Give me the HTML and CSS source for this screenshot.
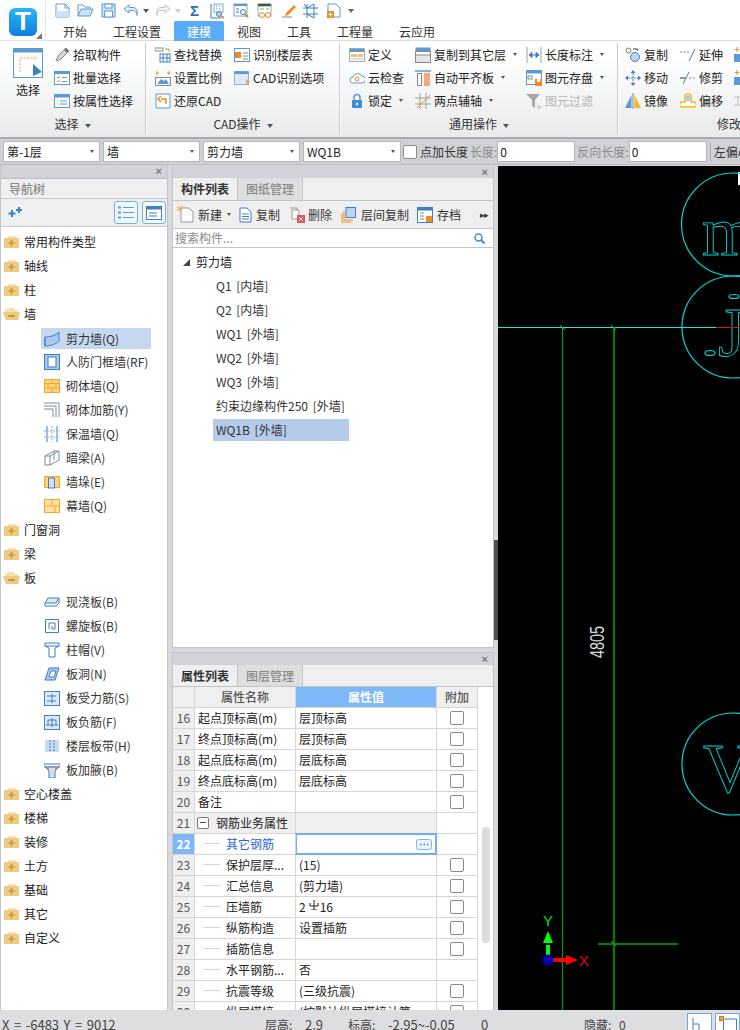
FILE: index.html
```html
<!DOCTYPE html>
<html lang="zh">
<head>
<meta charset="utf-8">
<title>建模</title>
<link rel="stylesheet" href="styles.css">
</head>
<body>
<svg class="sprite" aria-hidden="true">
  <symbol id="fplus" viewBox="0 0 15 14"><path d="M4 1h7l1 2H4z" fill="#f5dfae"/><rect x="0" y="3" width="15" height="10" fill="#efcb82"/><path d="M7.5 5v6M4.500 8h6" stroke="#c9963c" stroke-width="1.600"/></symbol>
  <symbol id="fminus" viewBox="0 0 17 14"><path d="M2 3l4-2h5l1 2h3v2H2z" fill="#f5dfae"/><path d="M0 5h17l-2 8H3z" fill="#efcb82"/><path d="M5 9h7" stroke="#b88a38" stroke-width="1.600"/></symbol>
</svg>
<div class="app">
  <header class="head">
    <div class="logo-col">
      <div class="logo">T</div>
      <span class="logo-corner"></span>
    </div>
    <div class="head-right">
      <div class="quick">
        <svg class="q q-a" width="15" height="15" viewBox="0 0 15 15"><path d="M1 1h9l4 4v9H1z" fill="#fff" stroke="#5b9bd5"/><path d="M1 8h13v6H1z" fill="#cfe2f5"/><path d="M10 1v4h4" fill="none" stroke="#5b9bd5"/></svg>
        <svg class="q q-b" width="17" height="15" viewBox="0 0 17 15"><path d="M1 13V2h5l2 2h5v2" fill="none" stroke="#5b9bd5"/><path d="M1 13l3-7h12l-3 7z" fill="#cfe2f5" stroke="#5b9bd5"/></svg>
        <svg class="q q-c" width="15" height="15" viewBox="0 0 15 15"><path d="M1 1h13v13H1z" fill="#cfe2f5" stroke="#5b9bd5"/><path d="M4 1h7v4H4zM3.500 8h8v6h-8z" fill="#fff" stroke="#5b9bd5"/></svg>
        <svg class="q q-d" width="16" height="13" viewBox="0 0 16 13"><path d="M6 1L1 5l5 4V6.500h4c2 0 4 1 4 5 1-5-1-8-4-8H6z" fill="#e4effa" stroke="#5b9bd5"/></svg>
        <span class="qc qc-a"></span>
        <svg class="q q-e" width="16" height="13" viewBox="0 0 16 13"><path d="M10 1l5 4-5 4V6.500H6c-2 0-4 1-4 5-1-5 1-8 4-8h4z" fill="#f4f4f4" stroke="#c4c4c4"/></svg>
        <span class="qc qc-b"></span>
        <span class="sigma">Σ</span>
        <svg class="q q-f" width="16" height="16" viewBox="0 0 16 16"><path d="M1 1v14h10" fill="none" stroke="#3f7fc4"/><rect x="4" y="1" width="9" height="8" fill="#fff" stroke="#7aa7d8"/><path d="M6 3h1M9 3h1M6 6h1M9 6h1" stroke="#3f7fc4"/><circle cx="9" cy="11" r="2.500" fill="#bcd6f0" stroke="#3f7fc4"/><path d="M11 13l3 2" stroke="#e8862a" stroke-width="2"/></svg>
        <svg class="q q-g" width="16" height="16" viewBox="0 0 16 16"><rect x="1" y="1" width="13" height="12" fill="#fff" stroke="#7aa7d8"/><path d="M1 1h13v2H1z" fill="#5b9bd5"/><path d="M3 6h3M3 9h3" stroke="#6a6a6a"/><circle cx="10" cy="9" r="2.500" fill="#fff" stroke="#3f7fc4"/><path d="M12 11l3 3" stroke="#e8862a" stroke-width="2"/></svg>
        <svg class="q q-h" width="16" height="16" viewBox="0 0 16 16"><rect x="1" y="1" width="13" height="12" fill="#fff" stroke="#9ab"/><path d="M1 1h13v2H1zM3 6h4M9 6h3" stroke="#7ab27a"/><circle cx="5" cy="12" r="2.500" fill="#fff" stroke="#e8862a"/><circle cx="11" cy="12" r="2.500" fill="#fff" stroke="#e8862a"/></svg>
        <svg class="q q-i" width="16" height="16" viewBox="0 0 16 16"><path d="M1 14h10" stroke="#888"/><path d="M5 10l8-8 2 2-8 8-3 1z" fill="#f08a24"/></svg>
        <svg class="q q-j" width="17" height="16" viewBox="0 0 17 16"><path d="M1 5h15M1 11h15M5 1v14M12 1v14M2 1l3 4 7-4M5 11l7 4" fill="none" stroke="#3f7fc4"/></svg>
        <svg class="q q-k" width="14" height="16" viewBox="0 0 14 16"><path d="M1 1h8l4 4v9H1z" fill="#fff" stroke="#5b9bd5"/><rect x="0" y="8" width="7" height="7" fill="#ee8b22"/><path d="M3.500 9.500v4M1.500 11.500h4" stroke="#fff"/></svg>
        <span class="qc qc-c"></span>
      </div>
      <nav class="tabs">
        <span class="tab">开始</span><span class="tab">工程设置</span><span class="tab tab-on">建模</span><span class="tab">视图</span><span class="tab">工具</span><span class="tab">工程量</span><span class="tab">云应用</span>
      </nav>
    </div>
  </header>

  <section class="ribbon">
    <div class="rg rg1">
      <div class="rg-body">
        <div class="big">
          <svg width="30" height="30" viewBox="0 0 30 30"><rect x="0.500" y="0.500" width="29" height="29" fill="#fff" stroke="#5b9bd5"/><rect x="0.500" y="0.500" width="29" height="4" fill="#5b9bd5"/><path d="M7 24V10h18" fill="none" stroke="#f5a623" stroke-dasharray="2 1.500"/><path d="M20 16l9 8-9 4z" fill="#3f7fc4"/></svg>
          <span>选择</span>
        </div>
        <div class="col">
          <div class="it"><svg width="16" height="16" viewBox="0 0 16 16"><path d="M2 14l2-5 6-6 3 3-6 6z" fill="#d8d8d8" stroke="#8a8a8a"/><path d="M10 2l2-1 3 3-1 2z" fill="#555"/></svg>拾取构件</div>
          <div class="it"><svg width="16" height="16" viewBox="0 0 16 16"><rect x="0.500" y="1.500" width="15" height="13" fill="#fff" stroke="#5b9bd5"/><rect x="0.500" y="1.500" width="15" height="2.500" fill="#5b9bd5"/><path d="M3 7l1 1 2-2M3 11l1 1 2-2" fill="none" stroke="#f08a24"/><path d="M8 7.500h5M8 11.500h5" stroke="#5b9bd5"/></svg>批量选择</div>
          <div class="it"><svg width="16" height="16" viewBox="0 0 16 16"><rect x="0.500" y="1.500" width="15" height="13" fill="#fff" stroke="#5b9bd5"/><rect x="0.500" y="1.500" width="15" height="3" fill="#5b9bd5"/><path d="M3 8h1M6 8h7M3 11h1M6 11h7" stroke="#5b9bd5"/></svg>按属性选择</div>
        </div>
      </div>
      <div class="rg-title">选择<i class="car"></i></div>
    </div>
    <div class="rg rg2">
      <div class="rg-body">
        <div class="col col-a">
          <div class="it"><svg width="16" height="16" viewBox="0 0 16 16"><rect x="0" y="1" width="8" height="3" fill="#fff" stroke="#888"/><path d="M10 2h4v3" fill="none" stroke="#f08a24"/><rect x="5" y="7" width="10" height="8" fill="#fff" stroke="#3f7fc4"/><path d="M8 7v8M12 7v8M5 11h10" stroke="#3f7fc4"/></svg>查找替换</div>
          <div class="it"><svg width="16" height="16" viewBox="0 0 16 16"><path d="M1 3h3M12 3h3" stroke="#f08a24"/><path d="M2 1v4M14 1v4" stroke="#f08a24"/><rect x="0.500" y="7.500" width="15" height="8" fill="#fff" stroke="#888"/><path d="M2 14l4-5 3 2 2-2 3 5z" fill="#5b9bd5"/></svg>设置比例</div>
          <div class="it"><svg width="16" height="16" viewBox="0 0 16 16"><path d="M1 1h14v14H1z" fill="#fff" stroke="#5b9bd5"/><path d="M11 11V6H6M6 3L3 6l3 3" fill="none" stroke="#f08a24" stroke-width="1.500"/></svg>还原CAD</div>
        </div>
        <div class="col col-b">
          <div class="it"><svg width="16" height="16" viewBox="0 0 16 16"><rect x="0.500" y="1.500" width="15" height="13" fill="#fff" stroke="#5b9bd5"/><rect x="1" y="5" width="6" height="6" fill="#ee8b22"/><path d="M9 6h5M9 9h5M9 12h5" stroke="#888"/></svg>识别楼层表</div>
          <div class="it"><svg width="16" height="16" viewBox="0 0 16 16"><rect x="0.500" y="1.500" width="14" height="13" fill="#dfeaf6" stroke="#8fb4da"/><rect x="0.500" y="1.500" width="14" height="2.500" fill="#5b9bd5"/><path d="M12 9l4 3-4 3z" fill="#f0a060"/></svg>CAD识别选项</div>
        </div>
      </div>
      <div class="rg-title">CAD操作<i class="car"></i></div>
    </div>
    <div class="rg rg3">
      <div class="rg-body">
        <div class="col col-c">
          <div class="it"><svg width="16" height="16" viewBox="0 0 16 16"><rect x="0.500" y="1.500" width="15" height="13" fill="#fff" stroke="#aaa"/><rect x="1" y="2" width="14" height="3" fill="#5b9bd5"/><rect x="2" y="7" width="6" height="3" fill="#f5c26b"/><rect x="9" y="7" width="5" height="3" fill="#f5c26b"/><path d="M2 12h12" stroke="#bbb"/></svg>定义</div>
          <div class="it"><svg width="16" height="16" viewBox="0 0 16 16"><path d="M4 13a3 3 0 010-6 5 5 0 019-1 3.500 3.500 0 010 7z" fill="#fff" stroke="#5b9bd5"/><circle cx="8" cy="9" r="2" fill="none" stroke="#f08a24"/></svg>云检查</div>
          <div class="it"><svg width="16" height="16" viewBox="0 0 16 16"><path d="M5 7V4.500a3 3 0 016 0V7" fill="none" stroke="#5b9bd5" stroke-width="1.500"/><rect x="3" y="7" width="10" height="8" rx="1" fill="#3f8ddc"/><circle cx="8" cy="11" r="1.200" fill="#fff"/></svg>锁定<i class="car-s"></i></div>
        </div>
        <div class="col col-d">
          <div class="it"><svg width="16" height="16" viewBox="0 0 16 16"><rect x="0.500" y="0.500" width="15" height="5" fill="#5b9bd5"/><rect x="0.500" y="4.500" width="15" height="11" fill="#fff" stroke="#888"/><rect x="0.500" y="8" width="15" height="7.500" fill="#e6e6e6" stroke="#888"/></svg>复制到其它层<i class="car-s"></i></div>
          <div class="it"><svg width="16" height="16" viewBox="0 0 16 16"><path d="M0 1h16" stroke="#5b9bd5" stroke-width="1.500"/><rect x="2.500" y="3.500" width="4" height="12" fill="#fff" stroke="#888"/><rect x="9" y="3" width="6" height="13" fill="#f8a878"/></svg>自动平齐板<i class="car-s"></i></div>
          <div class="it"><svg width="16" height="16" viewBox="0 0 16 16"><path d="M0 5h16M0 11h16M5 0v16M11 0v16" stroke="#a0a0a0"/><path d="M2 15L15 2" stroke="#f08a24"/></svg>两点辅轴<i class="car-s"></i></div>
        </div>
        <div class="col col-e">
          <div class="it"><svg width="16" height="16" viewBox="0 0 16 16"><path d="M1 0v16M15 0v16" stroke="#8aa"/><path d="M3 8h10M3 8l3-2.500v5zM13 8l-3-2.500v5z" fill="#3f7fc4" stroke="#3f7fc4"/></svg>长度标注<i class="car-s"></i></div>
          <div class="it"><svg width="16" height="16" viewBox="0 0 16 16"><rect x="0.500" y="0.500" width="15" height="14" fill="#fff" stroke="#5b9bd5"/><rect x="0.500" y="0.500" width="15" height="3" fill="#5b9bd5"/><rect x="2" y="6" width="4" height="3" fill="none" stroke="#888"/><rect x="9" y="9" width="7" height="7" fill="#f08a24"/><rect x="11" y="9" width="3" height="3" fill="#fff"/></svg>图元存盘<i class="car-s"></i></div>
          <div class="it it-off"><svg width="16" height="16" viewBox="0 0 16 16"><path d="M0 1h14L9 7v8l-3-2V7z" fill="#a8a8a8"/><path d="M11 13h4M11 15h4" stroke="#bbb"/></svg>图元过滤</div>
        </div>
      </div>
      <div class="rg-title">通用操作<i class="car"></i></div>
    </div>
    <div class="rg rg4">
      <div class="rg-body">
        <div class="col col-f">
          <div class="it"><svg width="16" height="16" viewBox="0 0 16 16"><circle cx="3.500" cy="3.500" r="2.500" fill="#fff" stroke="#777"/><circle cx="10" cy="10" r="4.500" fill="#bcd6f0" stroke="#3f7fc4"/><path d="M8 2h4l1 2" fill="none" stroke="#333"/></svg>复制</div>
          <div class="it"><svg width="16" height="16" viewBox="0 0 16 16"><path d="M8 0l2.500 3h-5zM8 16l2.500-3h-5zM0 8l3-2.500v5zM16 8l-3-2.500v5z" fill="#3f7fc4"/><path d="M3 8h10M8 3v10" stroke="#3f7fc4" stroke-dasharray="2 1"/></svg>移动</div>
          <div class="it"><svg width="16" height="16" viewBox="0 0 16 16"><path d="M6.500 2v13H0z" fill="#5b9bd5"/><path d="M8 0v16" stroke="#888"/><path d="M9.500 2v13H16z" fill="#f5b52a"/></svg>镜像</div>
        </div>
        <div class="col col-g">
          <div class="it"><svg width="16" height="16" viewBox="0 0 16 16"><path d="M0 5h9" stroke="#888" stroke-dasharray="2 1.500"/><path d="M9 14L15 2" stroke="#3f7fc4"/></svg>延伸</div>
          <div class="it"><svg width="16" height="16" viewBox="0 0 16 16"><path d="M0 8h6" stroke="#333"/><path d="M9 8h7" stroke="#888" stroke-dasharray="2 1.500"/><path d="M3 14L9 2" stroke="#3f7fc4"/></svg>修剪</div>
          <div class="it"><svg width="16" height="16" viewBox="0 0 16 16"><path d="M5 9V4a3 3 0 016 0v5h3a2 2 0 010 5H2a2 2 0 010-5z" fill="#fff" stroke="#f5b52a" stroke-width="1.500"/><path d="M7 8V4a1 1 0 012 0v4" fill="none" stroke="#5b9bd5"/></svg>偏移</div>
        </div>
        <div class="col col-h">
          <div class="it"><svg width="16" height="16" viewBox="0 0 16 16"><path d="M3 0v5M1 2.500h4" stroke="#f08a24"/><rect x="0" y="7" width="9" height="8" fill="#5b9bd5"/></svg></div>
          <div class="it"><svg width="16" height="16" viewBox="0 0 16 16"><path d="M3 0v5M1 2.500h4" stroke="#f08a24"/><rect x="0" y="7" width="9" height="8" fill="#5b9bd5"/></svg></div>
          <div class="it"><svg width="16" height="16" viewBox="0 0 16 16"><path d="M0 4h8M4 4v8M0 12h8" fill="none" stroke="#bbb"/></svg></div>
        </div>
      </div>
      <div class="rg-title rg-title-l">修改</div>
    </div>
  </section>

  <section class="bar">
    <div class="combo c1">第-1层<i class="car-s"></i></div>
    <div class="combo c2">墙<i class="car-s"></i></div>
    <div class="combo c3">剪力墙<i class="car-s"></i></div>
    <div class="combo c4">WQ1B<i class="car-s"></i></div>
    <span class="cb cb-bar"></span>
    <span class="bar-t">点加长度</span>
    <span class="bar-g">长度:</span>
    <div class="inp">0</div>
    <span class="bar-g">反向长度:</span>
    <div class="inp">0</div>
    <span class="bar-sep"></span>
    <span class="bar-t">左偏心</span>
  </section>

  <main class="main">
    <aside class="panel left">
      <div class="ptitle"><span class="x">×</span></div>
      <div class="nav-h">导航树</div>
      <div class="nav-tools">
        <svg class="star" width="14" height="12" viewBox="0 0 14 12"><path d="M4 3v7M0.500 6.500h7M11 0v6M8 3h6" stroke="#3f7fc4" stroke-width="2"/></svg>
        <span class="nbtn"><svg width="16" height="14" viewBox="0 0 16 14"><path d="M0 1.500h3M0 6.500h3M0 11.500h3" stroke="#5b9bd5" stroke-width="2" stroke-dasharray="1 0"/><path d="M5 1.500h11M5 6.500h11M5 11.500h11" stroke="#5b9bd5"/></svg></span>
        <span class="nbtn"><svg width="16" height="14" viewBox="0 0 16 14"><rect x="0.500" y="0.500" width="15" height="13" fill="#fff" stroke="#3f7fc4"/><rect x="0.500" y="0.500" width="15" height="3" fill="#3f7fc4"/><path d="M3 7h8M3 10h8" stroke="#3f7fc4"/></svg></span>
      </div>
      <div class="tree">
        <div class="tn"><svg width="15" height="14"><use href="#fplus"/></svg>常用构件类型</div>
        <div class="tn"><svg width="15" height="14"><use href="#fplus"/></svg>轴线</div>
        <div class="tn"><svg width="15" height="14"><use href="#fplus"/></svg>柱</div>
        <div class="tn tn-open"><svg width="17" height="14"><use href="#fminus"/></svg>墙</div>
        <div class="tc tc-sel"><svg width="16" height="16" viewBox="0 0 16 16"><path d="M1 6c4 0 10-1 14-5v9c-4 4-10 5-14 5z" fill="#a9c9ee" stroke="#3f7fc4"/><path d="M1 6v9" stroke="#3f7fc4"/></svg>剪力墙(Q)</div>
        <div class="tc"><svg width="16" height="16" viewBox="0 0 16 16"><rect x="0.500" y="0.500" width="15" height="15" fill="#a9c9ee" stroke="#3f7fc4"/><rect x="4" y="3" width="8" height="10" fill="#fff" stroke="#3f7fc4"/></svg>人防门框墙(RF)</div>
        <div class="tc"><svg width="16" height="14" viewBox="0 0 16 14"><rect x="0.500" y="0.500" width="15" height="13" fill="#fbd583" stroke="#f5a623"/><path d="M0 4.500h16M0 9h16M8 0v4.500M4 4.500V9M12 4.500V9M8 9v5" stroke="#f5a623"/></svg>砌体墙(Q)</div>
        <div class="tc"><svg width="16" height="16" viewBox="0 0 16 16"><path d="M0 1h15v14M0 4h12v11M0 7h9v8" fill="none" stroke="#7c8a96"/></svg>砌体加筋(Y)</div>
        <div class="tc"><svg width="16" height="16" viewBox="0 0 16 16"><path d="M3 0v16M13 0v16" stroke="#3f7fc4"/><path d="M8 0v16M0 5h16M0 11h16" stroke="#8fb4da" stroke-dasharray="2 1"/></svg>保温墙(Q)</div>
        <div class="tc"><svg width="16" height="16" viewBox="0 0 16 16"><path d="M1 6l9-5h5v9l-9 5H1z" fill="#fff" stroke="#7c8a96"/><path d="M1 6h5v9M6 6l9-5" fill="none" stroke="#7c8a96"/><path d="M10 1v9" stroke="#5b9bd5"/></svg>暗梁(A)</div>
        <div class="tc"><svg width="16" height="14" viewBox="0 0 16 14"><rect x="0.500" y="1.500" width="15" height="11" fill="#fbd583" stroke="#f5a623"/><rect x="4.500" y="3" width="6" height="10" fill="#cfe2f5" stroke="#3f7fc4"/></svg>墙垛(E)</div>
        <div class="tc"><svg width="16" height="14" viewBox="0 0 16 14"><rect x="0.500" y="0.500" width="15" height="13" fill="#fde2a8" stroke="#f5a623"/><path d="M8 0v7M0 7h16M11 7v7" stroke="#f5a623"/></svg>幕墙(Q)</div>
        <div class="tn"><svg width="15" height="14"><use href="#fplus"/></svg>门窗洞</div>
        <div class="tn"><svg width="15" height="14"><use href="#fplus"/></svg>梁</div>
        <div class="tn tn-open"><svg width="17" height="14"><use href="#fminus"/></svg>板</div>
        <div class="tc"><svg width="16" height="10" viewBox="0 0 16 10"><path d="M4 1h11l-3 5H1z" fill="#dce9f7" stroke="#3f7fc4"/><path d="M1 6v3h11l3-3V1" fill="none" stroke="#3f7fc4"/></svg>现浇板(B)</div>
        <div class="tc"><svg width="14" height="14" viewBox="0 0 14 14"><path d="M.500.500h13v13H.500zM4 10V4h6v6H7V7" fill="none" stroke="#3f7fc4"/></svg>螺旋板(B)</div>
        <div class="tc"><svg width="16" height="16" viewBox="0 0 16 16"><path d="M1 1h14v3l-4 2v9H5V6L1 4z" fill="#fff" stroke="#3f7fc4"/><path d="M1 4h14" stroke="#3f7fc4"/></svg>柱帽(V)</div>
        <div class="tc"><svg width="16" height="14" viewBox="0 0 16 14"><path d="M5 1h10l-4 12H1z" fill="#a9c9ee" stroke="#3f7fc4"/><path d="M7 4h5l-2 6H5z" fill="#fff" stroke="#3f7fc4"/></svg>板洞(N)</div>
        <div class="tc"><svg width="16" height="15" viewBox="0 0 16 15"><rect x="0.500" y="0.500" width="15" height="14" fill="#dce9f7" stroke="#3f7fc4"/><path d="M3 5h9M3 10h9M8 3v9" stroke="#3f7fc4"/></svg>板受力筋(S)</div>
        <div class="tc"><svg width="16" height="15" viewBox="0 0 16 15"><rect x="0.500" y="0.500" width="15" height="14" fill="#dce9f7" stroke="#3f7fc4"/><path d="M4 10V5h8v5M8 3v9M2 10h12" fill="none" stroke="#3f7fc4"/></svg>板负筋(F)</div>
        <div class="tc"><svg width="14" height="12" viewBox="0 0 14 12"><rect width="14" height="12" fill="#c7dcf2"/><path d="M5 0v12M9 0v12" stroke="#3f7fc4" stroke-dasharray="2 1"/></svg>楼层板带(H)</div>
        <div class="tc"><svg width="16" height="15" viewBox="0 0 16 15"><path d="M0 1h16v3H0z" fill="#fff" stroke="#3f7fc4"/><path d="M1 4h14l-4 4V15H5V8z" fill="#cfe2f5" stroke="#3f7fc4"/><path d="M1 4h4v4zM15 4h-4v4z" fill="#f08a24"/></svg>板加腋(B)</div>
        <div class="tn"><svg width="15" height="14"><use href="#fplus"/></svg>空心楼盖</div>
        <div class="tn"><svg width="15" height="14"><use href="#fplus"/></svg>楼梯</div>
        <div class="tn"><svg width="15" height="14"><use href="#fplus"/></svg>装修</div>
        <div class="tn"><svg width="15" height="14"><use href="#fplus"/></svg>土方</div>
        <div class="tn"><svg width="15" height="14"><use href="#fplus"/></svg>基础</div>
        <div class="tn"><svg width="15" height="14"><use href="#fplus"/></svg>其它</div>
        <div class="tn"><svg width="15" height="14"><use href="#fplus"/></svg>自定义</div>
      </div>
    </aside>

    <div class="mid">
      <section class="panel comp">
        <div class="ptitle"><span class="x">×</span></div>
        <div class="ptabs"><span class="ptab ptab-on">构件列表</span><span class="ptab">图纸管理</span></div>
        <div class="ctools">
          <svg class="ct1" width="17" height="17" viewBox="0 0 17 17"><path d="M4 2h8l4 4v10H4z" fill="#fff" stroke="#999"/><path d="M0 1l3 2M3 0v4M6 0L3 3M0 4h5" stroke="#f5a623"/></svg>
          <span class="ct-t ct-new">新建</span><i class="car-s car-new"></i>
          <svg class="ct2" width="13" height="16" viewBox="0 0 13 16"><path d="M1 1h7l4 4v10H1z" fill="#fff" stroke="#3f7fc4"/><path d="M3 7h7M3 9.500h7M3 12h7" stroke="#3f7fc4"/></svg>
          <span class="ct-t ct-copy">复制</span>
          <svg class="ct3" width="16" height="16" viewBox="0 0 16 16"><path d="M3 3h7v9H3z" fill="#fff" stroke="#999"/><path d="M1 1h7v2" fill="none" stroke="#999"/><rect x="8" y="8" width="8" height="8" fill="#e0555a"/><path d="M10 10l4 4M14 10l-4 4" stroke="#fff"/></svg>
          <span class="ct-t ct-del">删除</span>
          <svg class="ct4" width="15" height="16" viewBox="0 0 15 16"><path d="M1 15V6M1 15h9M3 13V4M3 13h9" fill="none" stroke="#f08a24"/><rect x="5" y="0.500" width="9.500" height="10" fill="#bcd6f0" stroke="#3f7fc4"/></svg>
          <span class="ct-t ct-lay">层间复制</span>
          <svg class="ct5" width="16" height="16" viewBox="0 0 16 16"><rect x="0.500" y="0.500" width="15" height="15" fill="#fff" stroke="#3f7fc4"/><rect x="0.500" y="0.500" width="15" height="3" fill="#3f7fc4"/><path d="M3 6h4M3 9h4M3 12h4" stroke="#888"/><rect x="9" y="9" width="6" height="6" fill="#f08a24"/></svg>
          <span class="ct-t ct-arc">存档</span>
          <span class="more">▸▸</span>
        </div>
        <div class="search"><span>搜索构件...</span><svg width="11" height="11" viewBox="0 0 11 11"><circle cx="4.500" cy="4.500" r="3.500" fill="none" stroke="#3f94c4" stroke-width="1.500"/><path d="M7 7l3.500 3.500" stroke="#3f94c4" stroke-width="2"/></svg></div>
        <div class="clist">
          <div class="cgroup"><i class="tri"></i>剪力墙</div>
          <div class="ci">Q1 [内墙]</div>
          <div class="ci">Q2 [内墙]</div>
          <div class="ci">WQ1 [外墙]</div>
          <div class="ci">WQ2 [外墙]</div>
          <div class="ci">WQ3 [外墙]</div>
          <div class="ci">约束边缘构件250 [外墙]</div>
          <div class="ci ci-sel">WQ1B [外墙]</div>
        </div>
      </section>
      <section class="panel prop">
        <div class="ptitle"><span class="x">×</span></div>
        <div class="ptabs"><span class="ptab ptab-on">属性列表</span><span class="ptab">图层管理</span></div>
        <div class="tbl">
          <div class="tbl-main">
            <div class="r r-head"><span class="n"></span><span class="h">属性名称</span><span class="h h-on">属性值</span><span class="h">附加</span></div>
            <div class="r"><span class="n">16</span><span class="k">起点顶标高(m)</span><span class="v">层顶标高</span><span class="a"><i class="cb"></i></span></div>
            <div class="r"><span class="n">17</span><span class="k">终点顶标高(m)</span><span class="v">层顶标高</span><span class="a"><i class="cb"></i></span></div>
            <div class="r"><span class="n">18</span><span class="k">起点底标高(m)</span><span class="v">层底标高</span><span class="a"><i class="cb"></i></span></div>
            <div class="r"><span class="n">19</span><span class="k">终点底标高(m)</span><span class="v">层底标高</span><span class="a"><i class="cb"></i></span></div>
            <div class="r"><span class="n">20</span><span class="k">备注</span><span class="v"></span><span class="a"><i class="cb"></i></span></div>
            <div class="r r-grp"><span class="n">21</span><span class="k k-grp"><i class="minus"></i>钢筋业务属性</span><span class="v"></span><span class="a"></span></div>
            <div class="r r-cur"><span class="n">22</span><span class="k kc">其它钢筋</span><span class="v v-cur"><svg class="dots" width="16" height="11" viewBox="0 0 16 11"><rect x="0.500" y="0.500" width="15" height="10" rx="2" fill="#eef5fd" stroke="#7db8f8"/><path d="M4 5.500h1.500M7.500 5.500H9M11 5.500h1.500" stroke="#3f7fc4" stroke-width="1.500"/></svg></span><span class="a"></span></div>
            <div class="r"><span class="n">23</span><span class="k kc">保护层厚...</span><span class="v">(15)</span><span class="a"><i class="cb"></i></span></div>
            <div class="r"><span class="n">24</span><span class="k kc">汇总信息</span><span class="v">(剪力墙)</span><span class="a"><i class="cb"></i></span></div>
            <div class="r"><span class="n">25</span><span class="k kc">压墙筋</span><span class="v">2<svg class="rebar" width="10" height="10" viewBox="0 0 10 10"><path d="M1 3v3h8V3M5 0v10M2 10h6" fill="none" stroke="#222"/></svg>16</span><span class="a"><i class="cb"></i></span></div>
            <div class="r"><span class="n">26</span><span class="k kc">纵筋构造</span><span class="v">设置插筋</span><span class="a"><i class="cb"></i></span></div>
            <div class="r"><span class="n">27</span><span class="k kc">插筋信息</span><span class="v"></span><span class="a"><i class="cb"></i></span></div>
            <div class="r"><span class="n">28</span><span class="k kc">水平钢筋...</span><span class="v">否</span><span class="a"></span></div>
            <div class="r"><span class="n">29</span><span class="k kc">抗震等级</span><span class="v">(三级抗震)</span><span class="a"><i class="cb"></i></span></div>
            <div class="r"><span class="n">30</span><span class="k kc">纵层搭接</span><span class="v">(按默认纵层搭接计算</span><span class="a"><i class="cb"></i></span></div>
          </div>
          <div class="sb"><span class="thumb"></span></div>
        </div>
      </section>
    </div>
    <div class="handle"><span></span></div>
    <div class="canvas">
      <svg class="cad" width="242" height="844" viewBox="498 166 242 844">
        <rect x="738" y="172" width="2" height="13" fill="#fff"/>
        <g fill="none" stroke="#00d8d8" stroke-width="1.200">
          <circle cx="733" cy="224.500" r="51.500"/>
          <circle cx="733" cy="327" r="51"/>
          <circle cx="733" cy="764" r="51"/>
          <ellipse cx="734" cy="296.500" rx="5" ry="2"/>
          <ellipse cx="710" cy="353" rx="5" ry="2.500"/>
        </g>
        <text class="ltr" x="702" y="255">m</text>
        <text class="ltr" x="718" y="356">J</text>
        <text class="ltr" x="703" y="792">V</text>
        <path d="M498 327.500H716" stroke="#19e6e6"/>
        <path d="M716 327.500H740" stroke="#d01818"/>
        <path d="M562.500 327V1010" stroke="#00a800"/>
        <path d="M614 327V1010" stroke="#008000" stroke-width="2"/>
        <path d="M598 944H678" stroke="#008000" stroke-width="2"/>
        <path d="M560 325l5 5M611 325l5 5M611 941l5 5" stroke="#00c000"/>
        <text class="dim" transform="translate(604 658) rotate(-90) scale(.72 1)">4805</text>
        <path d="M548 960V945" stroke="#00ff00" stroke-width="4"/>
        <path d="M548 931l5 12h-10z" fill="#00ff00"/>
        <text class="ax ax-y" x="543" y="926">Y</text>
        <path d="M552 960H570" stroke="#ff0000" stroke-width="4"/>
        <path d="M578 960l-12 5v-10z" fill="#ff0000"/>
        <text class="ax ax-x" x="579" y="966">X</text>
        <circle cx="548" cy="960" r="5.500" fill="#0000b0"/>
      </svg>
    </div>
  </main>

  <footer class="status">
    <span class="s s1">X = -6483 Y = 9012</span>
    <span class="s s2">层高:</span><span class="s s3">2.9</span>
    <span class="s s4">标高:</span><span class="s s5">-2.95~-0.05</span>
    <span class="s s6">0</span>
    <span class="s s7">隐藏:&nbsp;0</span>
    <span class="sbtn sbtn1"><svg width="8" height="12" viewBox="0 0 8 12"><path d="M1 0v12M1 6h6v6" fill="none" stroke="#3f7fc4"/></svg></span>
    <span class="sbtn sbtn2"><svg width="18" height="14" viewBox="0 0 18 14"><path d="M4.500 14V3h13v11" fill="none" stroke="#3f7fc4"/><rect x="0.500" y="0.500" width="4" height="4" fill="#f5a060" stroke="#d07a30"/></svg></span>
  </footer>
</div>
</body>
</html>
```
FILE: styles.css
```css
* { box-sizing: border-box; }
html, body { margin: 0; padding: 0; }
body {
  width: 740px; height: 1030px; overflow: hidden;
  font: 12px/18px "Noto Sans CJK SC", "Noto Sans", sans-serif;
  color: #222; background: #fff;
}
i { font-style: normal; display: inline-block; }
.sprite { width: 0; height: 0; position: absolute; }
.app { width: 740px; height: 1030px; display: flex; flex-direction: column; overflow: hidden; }

/* header */
.head { height: 41px; display: flex; background: #fff; flex: none; }
.logo-col { width: 46px; border-right: 1px solid #e6e6e6; position: relative; flex: none; padding: 8px 0 0 9px; border-bottom: 1px solid #e6e6e6; }
.logo {
  width: 28px; height: 28px; border-radius: 6px;
  background: linear-gradient(#27b6f5, #0f7fe0);
  color: #fff; font: 900 26px/27px "Liberation Sans", sans-serif; text-align: center;
}
.logo-corner { position: absolute; right: 3px; bottom: 1px; border: 3px solid transparent; border-right-color: #777; border-bottom-color: #777; }
.head-right { flex: 1; min-width: 0; }
.quick { height: 21px; display: flex; align-items: center; padding-left: 9px; }
.q { flex: none; }
.q-b { margin-left: 7px; } .q-c { margin-left: 7px; } .q-d { margin-left: 7px; }
.qc { width: 0; height: 0; border: 3px solid transparent; border-top: 4px solid #555; border-bottom: 0; margin-left: 4px; flex: none; }
.qc-b { border-top-color: #ccc; }
.q-e { margin-left: 6px; }
.sigma { color: #2f6fb5; font: bold 15px/16px "Liberation Sans", sans-serif; margin-left: 9px; width: 12px; flex: none; }
.q-f { margin-left: 8px; } .q-g { margin-left: 7px; } .q-h { margin-left: 8px; } .q-i { margin-left: 8px; }
.q-j { margin-left: 5px; } .q-k { margin-left: 8px; }
.qc-c { margin-left: 7px; border-top-color: #666; }
.tabs { height: 20px; display: flex; padding-left: 4px; border-bottom: 1px solid #dcdcdc; }
.tab { padding: 0 13px; height: 20px; line-height: 21px; color: #333; flex: none; }
.tab-on { background: #5aabf8; color: #fff; border-radius: 2px 2px 0 0; }

/* ribbon */
.ribbon { height: 98px; flex: none; display: flex; background: linear-gradient(#fff 15%, #e9ebeb); border-bottom: 2px solid #a9abae; }
.rg { flex: none; display: flex; flex-direction: column; border-right: 1px solid #c9cbcc; margin: 2px 0 3px; box-shadow: 1px 0 0 #fff; }
.rg1 { width: 146px; }
.rg2 { width: 193px; margin-left: 1px; }
.rg3 { width: 277px; margin-left: 1px; }
.rg4 { width: 122px; margin-left: 1px; border-right: 0; box-shadow: none; }
.rg-body { height: 70px; display: flex; }
.rg-title { height: 22px; text-align: center; line-height: 23px; color: #333; }
.rg-title-l { text-align: left; padding-left: 98px; }
.big { width: 54px; flex: none; padding: 5px 0 0 13px; }
.big svg { display: block; }
.big span { display: block; margin: 3px 0 0 3px; }
.col { display: flex; flex-direction: column; flex: none; }
.it { height: 23px; display: flex; align-items: center; gap: 3px; white-space: nowrap; }
.it svg { flex: none; }
.it-off { color: #b5b5b5; }
.col-a { margin-left: 8px; width: 79px; }
.col-c { margin-left: 8px; width: 66px; }
.col-d { width: 111px; }
.col-f { margin-left: 6px; width: 55px; }
.col-g { width: 54px; }
.car { width: 0; height: 0; border: 3.500px solid transparent; border-top: 4px solid #555; border-bottom: 0; margin-left: 6px; vertical-align: middle; }
.car-s { width: 0; height: 0; border: 2.500px solid transparent; border-top: 3px solid #555; border-bottom: 0; margin-left: 6px; }
.it .car-s { margin-left: 4px; }

/* property bar */
.bar { height: 26px; flex: none; display: flex; align-items: center; padding-left: 3px; background: #cfd1d4; border-bottom: 1px solid #b9bbbe; white-space: nowrap; }
.combo { width: 97px; height: 21px; background: #fff; border: 1px solid #b5b7ba; padding-left: 3px; margin-right: 3px; line-height: 19px; display: flex; align-items: center; justify-content: space-between; flex: none; padding-right: 5px; }
.c4 { width: 98px; margin-right: 2px; }
.cb { display: inline-block; width: 14px; height: 14px; background: #fff; border: 1px solid #8a8a8a; border-radius: 2px; flex: none; }
.cb-bar { margin-right: 3px; }
.bar-t { flex: none; color: #333; }
.bar-g { color: #8b8d90; flex: none; margin-left: 2px; }
.inp { width: 78px; height: 21px; background: #fff; border: 1px solid #b5b7ba; padding-left: 2px; line-height: 19px; flex: none; }
.bar-sep { width: 1px; height: 18px; background: #a9abae; margin: 0 3px; flex: none; }

/* main */
.main { flex: 1; min-height: 0; display: flex; background: #d8d9dc; }
.panel { display: flex; flex-direction: column; }
.ptitle { height: 12px; flex: none; background: #d2d3d8; text-align: right; padding-right: 5px; }
.left .ptitle { height: 13px; }
.x { color: #777; font: bold 11px/12px "Liberation Sans", sans-serif; display: block; }
.left { width: 168px; flex: none; border-left: 1px solid #c4c5c8; border-right: 1px solid #c4c5c8; background: #fff; }
.nav-h { height: 21px; flex: none; background: #efefef; color: #8a8a8a; font-weight: 500; padding-left: 8px; line-height: 20px; border-top: 1px solid #bdbec1; border-bottom: 1px solid #c9cacd; }
.nav-tools { height: 28px; flex: none; background: #efefef; display: flex; align-items: center; padding: 0 0 0 7px; border-bottom: 1px solid #c9cacd; }
.star { margin-right: auto; }
.nbtn { width: 24px; height: 23px; border: 1px solid #6fb0ee; border-radius: 3px; background: #f3f8fd; display: flex; align-items: center; justify-content: center; margin-right: 4px; }
.nbtn + .nbtn { margin-right: 1px; }
.tree { flex: 1; padding-top: 3px; display: flex; flex-direction: column; overflow: hidden; }
.tn { height: 24px; flex: none; display: flex; align-items: center; padding-left: 3px; gap: 5px; white-space: nowrap; color: #222; }
.tn-open { padding-left: 2px; gap: 4px; }
.tc { height: 24px; flex: none; display: flex; align-items: center; padding-left: 43px; white-space: nowrap; color: #333; }
.tc svg { width: 16px; margin-right: 6px; flex: none; }
.tc-sel { height: 21px; margin: 2px 0 1px 40px; width: 110px; padding-left: 3px; background: #c6d8f0; }

.mid { width: 322px; margin-left: 4px; flex: none; display: flex; flex-direction: column; gap: 4px; padding-top: 1px; }
.comp { height: 482px; flex: none; background: #fff; border: solid #c4c5c8; border-width: 0 1px 1px; }
.prop { flex: 1; min-height: 0; background: #fff; border: solid #c4c5c8; border-width: 1px 1px 0; }
.ptabs { height: 23px; flex: none; display: flex; background: #efefef; border-bottom: 1px solid #c4c5c8; }
.prop .ptabs { height: 22px; }
.ptab { width: 65px; text-align: center; line-height: 21px; font-weight: 500; color: #8a8a8a; background: #dedede; border-right: 1px solid #c4c5c8; }
.ptab-on { background: #efefef; color: #333; font-weight: 700; }
.ctools { height: 28px; flex: none; position: relative; display: flex; align-items: center; background: #efefef; border-bottom: 1px solid #c4c5c8; padding-left: 4px; white-space: nowrap; color: #333; }
.ct-new { margin-left: 4px; }
.car-new { margin-left: 5px; }
.ct2 { margin-left: 8px; }
.ct-copy { margin-left: 4px; }
.ct3 { margin-left: 9px; }
.ct-del { margin-left: 3px; }
.ct4 { margin-left: 9px; }
.ct-lay { margin-left: 5px; }
.ct5 { margin-left: 8px; }
.ct-arc { margin-left: 4px; }
.more { margin-left: auto; margin-right: 1px; font-size: 9px; color: #333; letter-spacing: -1px; width: 12px; }
.search { height: 19px; flex: none; display: flex; align-items: center; justify-content: space-between; padding: 0 8px 0 2px; border-bottom: 1px solid #c4c5c8; color: #8a8a8a; }
.clist { flex: 1; padding-top: 2px; }
.cgroup { height: 24px; line-height: 24px; padding-left: 10px; display: flex; align-items: center; gap: 6px; }
.tri { width: 0; height: 0; border-style: solid; border-width: 0 0 7px 7px; border-color: transparent transparent #444 transparent; }
.ci { height: 24px; line-height: 24px; padding-left: 43px; color: #333; white-space: nowrap; word-spacing: 2px; }
.ci-sel { height: 22px; line-height: 22px; width: 136px; margin: 1px 0 1px 40px; padding-left: 3px; background: #b5cbea; }

/* table */
.tbl { flex: 1; min-height: 0; display: flex; overflow: hidden; }
.tbl-main { width: 305px; flex: none; }
.r { height: 21px; display: grid; grid-template-columns: 22px 101px 141px 41px; border-bottom: 1px solid #d6d6d6; }
.r > span { border-right: 1px solid #d6d6d6; white-space: nowrap; overflow: hidden; line-height: 20px; }
.n { background: #efefef; text-align: center; color: #555; }
.k { padding-left: 3px; color: #222; }
.v { padding-left: 3px; color: #222; display: flex; align-items: center; }
.a { display: flex; align-items: center; justify-content: center; }
.r-head { background: #efefef; }
.h { text-align: center; color: #555; font-weight: 500; }
.h-on { background: #7db8f8; color: #fff; font-weight: 700; }
.r-grp .v { background: #efefef; }
.r-grp .k { background: #efefef; }
.k-grp { display: flex; align-items: center; gap: 7px; padding-left: 2px; }
.minus { width: 12px; height: 12px; border: 1px solid #777; border-radius: 2px; background: #fff; position: relative; flex: none; }
.minus::after { content: ""; position: absolute; left: 2px; top: 4px; width: 6px; height: 1px; background: #444; }
.kc { padding-left: 31px; position: relative; }
.kc::before { content: ""; position: absolute; left: 8px; top: 9px; width: 17px; height: 1px; background: #d6d6d6; }
.r-cur .n { background: #7db8f8; color: #fff; font-weight: 700; }
.r-cur .kc { color: #2a66d8; }
.v-cur { border: 2px solid #6eaef2 !important; justify-content: flex-end; padding-right: 3px; margin: -1px 0 -1px -1px; overflow: visible; }
.dots { flex: none; }
.rebar { margin: -4px 1px 0 3px; }
.sb { flex: 1; position: relative; background: #fff; }
.thumb { position: absolute; left: 4px; top: 140px; width: 8px; height: 116px; background: #dcdcdc; border-radius: 4px; }

.handle { width: 4px; flex: none; position: relative; }
.handle span { position: absolute; left: 0; top: 375px; width: 4px; height: 100px; background: #4c4e50; }
.canvas { flex: 1; min-width: 0; background: #000; margin-top: 1px; overflow: hidden; }
.cad { display: block; }
.ltr { font: 70px "Liberation Serif", serif; fill: #000; stroke: #00d0d0; stroke-width: 0.900; }
.dim { font: 20px "Liberation Sans", sans-serif; fill: #d8d8d8; }
.ax { font: 15px "Liberation Sans", sans-serif; }
.ax-y { fill: #00e000; }
.ax-x { fill: #f00000; }

/* status */
.status { height: 20px; flex: none; position: relative; background: #dedee0; color: #555; }
.s { position: absolute; top: 6px; white-space: nowrap; color: #444; }
.s1 { left: 2px; font-size: 13px; word-spacing: 1.600px; }
.s2 { left: 265px; } .s3 { left: 305px; font-size: 13px; }
.s4 { left: 348px; } .s5 { left: 388px; font-size: 13px; }
.s6 { left: 481px; font-size: 13px; }
.s7 { left: 584px; word-spacing: 5px; }
.sbtn { position: absolute; top: 3px; width: 25px; height: 17px; background: #fff; border: 1px solid #6fa8e0; border-bottom: 0; display: flex; align-items: flex-end; padding-left: 4px; overflow: hidden; }
.sbtn1 { left: 687px; }
.sbtn2 { left: 715px; padding-left: 3px; }
```
